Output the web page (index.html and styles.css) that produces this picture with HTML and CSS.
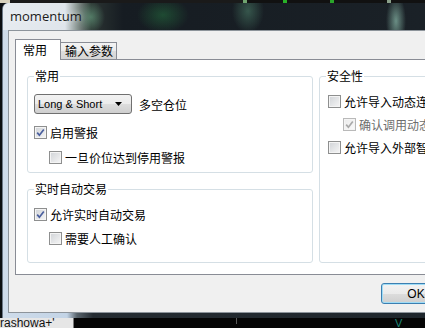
FILE: index.html
```html
<!DOCTYPE html>
<html lang="zh-CN">
<head>
    <meta charset="UTF-8">
    <title>momentum</title>
    <link rel="stylesheet" href="styles.css">
</head>
<body>
<div class="screen">
    <div class="chart-top"></div>

    <div class="window">
        <div class="titlebar"><span class="title">momentum</span></div>

        <div class="client">
            <div class="tabs">
                <div class="tab active">常用</div>
                <div class="tab">输入参数</div>
            </div>

            <div class="panel">
                <div class="col-left">
                    <div class="group g-common">
                        <div class="group-title">常用</div>
                        <div class="combo-row">
                            <div class="combo">
                                <span>Long &amp; Short</span>
                                <svg class="arrow" width="7" height="4" viewBox="0 0 7 4"><polygon points="0,0 7,0 3.5,4" fill="#000"/></svg>
                            </div>
                            <span class="combo-label">多空仓位</span>
                        </div>
                        <div class="check first">
                            <span class="box checked"><svg width="11" height="11" viewBox="0 0 11 11"><path d="M2.2 5.6 L4.4 8.2 L8.8 2.4" fill="none" stroke="#4a5f9e" stroke-width="1.7"/></svg></span>
                            <span>启用警报</span>
                        </div>
                        <div class="check sub">
                            <span class="box"></span>
                            <span>一旦价位达到停用警报</span>
                        </div>
                    </div>

                    <div class="group g-auto">
                        <div class="group-title">实时自动交易</div>
                        <div class="check first">
                            <span class="box checked"><svg width="11" height="11" viewBox="0 0 11 11"><path d="M2.2 5.6 L4.4 8.2 L8.8 2.4" fill="none" stroke="#4a5f9e" stroke-width="1.7"/></svg></span>
                            <span>允许实时自动交易</span>
                        </div>
                        <div class="check sub">
                            <span class="box"></span>
                            <span>需要人工确认</span>
                        </div>
                    </div>
                </div>

                <div class="group g-safe">
                    <div class="group-title">安全性</div>
                    <div class="check first">
                        <span class="box"></span>
                        <span>允许导入动态连</span>
                    </div>
                    <div class="check sub disabled">
                        <span class="box checked"><svg width="11" height="11" viewBox="0 0 11 11"><path d="M2.2 5.6 L4.4 8.2 L8.8 2.4" fill="none" stroke="#a9a9a9" stroke-width="1.7"/></svg></span>
                        <span>确认调用动态</span>
                    </div>
                    <div class="check">
                        <span class="box"></span>
                        <span>允许导入外部智</span>
                    </div>
                </div>
            </div>

            <div class="buttons">
                <button class="btn default">OK</button>
                <button class="btn">取消</button>
            </div>
        </div>
    </div>

    <div class="bottom">
        <div class="task">rashowa+'</div>
        <div class="chart-bottom"><span class="mark">V</span></div>
    </div>
</div>
</body>
</html>
```

FILE: styles.css
```css
* {
    box-sizing: border-box;
}
body {
    margin: 0;
    width: 425px;
    height: 328px;
    overflow: hidden;
    background: #0b0e11;
    font-family: "Noto Sans CJK SC", sans-serif;
    font-size: 12px;
    color: #000;
}
.screen {
    display: flex;
    flex-direction: column;
    width: 425px;
    height: 328px;
    overflow: hidden;
}
.chart-top {
    flex: none;
    height: 3px;
    background: linear-gradient(to right, #d6d0bc 0, #d6d0bc 10px, #1a1a1a 10px, #1a1a1a 243px, #6fa36f 243px, #6fa36f 247px, #111 247px, #111 283px, #28b028 283px, #28b028 287px, #111 287px, #111 330px, #2aa52a 330px, #2aa52a 334px, #111 334px, #111 387px, #8aa08a 387px, #8aa08a 391px, #111 391px);
}

/* window frame */
.window {
    flex: none;
    width: 480px;
    height: 315px;
    margin-left: 2px;
    display: flex;
    flex-direction: column;
    padding-bottom: 5px;
    border-radius: 6px 0 0 0;
    border-left: 1px solid #6b7886;
    background: linear-gradient(to right, #cfdcea 0, #c3d4e6 64px, #58636b 74px, #252c32 90px, #1e252b 100%);
}
.titlebar {
    flex: none;
    height: 27px;
    padding-left: 7px;
    border-radius: 6px 0 0 0;
    background:
        radial-gradient(ellipse 10px 26px at 393px 18px, rgba(160, 215, 195, 0.6), transparent),
        radial-gradient(ellipse 16px 22px at 245px 8px, rgba(110, 190, 150, 0.35), transparent),
        radial-gradient(ellipse 26px 18px at 160px 12px, rgba(40, 130, 70, 0.45), transparent),
        radial-gradient(ellipse 14px 16px at 88px 14px, rgba(120, 190, 150, 0.5), transparent),
        linear-gradient(to right, #e6ebf0 0, #dfe5eb 62px, #8a9692 74px, #2c3533 88px, #161c22 120px, #1b2228 100%);
}
.title {
    font-family: "Open Sans", sans-serif;
    font-size: 13px;
    line-height: 26px;
    color: #1b1b1b;
    text-shadow: 0 0 6px rgba(255, 255, 255, 0.8);
}
.client {
    flex: none;
    height: 283px;
    margin-left: 5px;
    padding: 8px 0 0 6px;
    border: 1px solid #8d949b;
    border-right: none;
    background: #f0f0f0;
}

/* tabs */
.tabs {
    display: flex;
    align-items: flex-end;
    height: 20px;
    position: relative;
    z-index: 1;
}
.tab {
    flex: none;
    width: 56px;
    height: 17px;
    padding-left: 4px;
    line-height: 16px;
    border: 1px solid #898c95;
    border-left: none;
    border-bottom: none;
    background: linear-gradient(#f3f3f3, #ebebeb 50%, #dddddd 50%, #d5d5d5);
}
.tab.active {
    width: 46px;
    height: 21px;
    margin-bottom: -1px;
    padding-left: 7px;
    line-height: 19px;
    border-left: 1px solid #898c95;
    background: #fff;
}
.panel {
    display: flex;
    height: 216px;
    padding: 16px 0 0 11px;
    border: 1px solid #898c95;
    border-right: none;
    background: #fff;
}
.col-left {
    flex: none;
    display: flex;
    flex-direction: column;
    gap: 16px;
    width: 286px;
}

/* group boxes */
.group {
    position: relative;
    border: 1px solid #d5dfe5;
    border-radius: 3px;
}
.group-title {
    position: absolute;
    top: -8px;
    left: 6px;
    padding: 0 1px;
    line-height: 14px;
    background: #fff;
}
.g-common {
    height: 97px;
    padding: 17px 6px 0;
}
.g-auto {
    height: 74px;
    padding: 18px 6px 0;
}
.g-safe {
    flex: none;
    width: 200px;
    height: 187px;
    margin-left: 6px;
    padding: 18px 8px 0;
}
.g-auto .check.first {
    margin-top: 0;
}
.g-auto .check.sub {
    margin-top: 11px;
}
.g-safe .check {
    margin-top: 10px;
}
.g-safe .check.first {
    margin-top: 0;
}

/* combobox */
.combo-row {
    display: flex;
    align-items: center;
}
.combo {
    display: flex;
    align-items: center;
    width: 98px;
    height: 20px;
    padding: 0 9px 0 3px;
    border: 1px solid #707070;
    border-radius: 3px;
    background: linear-gradient(#f2f2f2, #ebebeb 50%, #dddddd 50%, #cfcfcf);
    font-family: "Liberation Sans", sans-serif;
    font-size: 11px;
}
.arrow {
    margin-left: auto;
}
.combo-label {
    margin-left: 7px;
}

/* checkboxes */
.check {
    display: flex;
    align-items: center;
    gap: 3px;
    height: 13px;
    margin-top: 12px;
    line-height: 13px;
    white-space: nowrap;
}
.check.sub {
    margin-left: 15px;
}
.box {
    flex: none;
    width: 13px;
    height: 13px;
    padding: 0;
    border: 1px solid #8e8f8f;
    background: linear-gradient(135deg, #d0d3d7, #f6f6f6);
    box-shadow: inset 0 0 0 1px #f4f4f4;
}
.box svg {
    display: block;
}
.disabled {
    color: #6d6d6d;
}
.disabled .box {
    border-color: #b9b9b9;
    background: linear-gradient(135deg, #ebebeb, #fafafa);
}

/* buttons */
.buttons {
    display: flex;
    gap: 7px;
    margin-top: 8px;
    padding-left: 366px;
}
.btn {
    flex: none;
    width: 70px;
    height: 21px;
    padding: 0;
    border: 1px solid #707070;
    border-radius: 3px;
    background: linear-gradient(#f2f2f2, #ebebeb 50%, #dddddd 50%, #cfcfcf);
    font-family: "Liberation Sans", sans-serif;
    font-size: 12px;
    color: #000;
}
.btn.default {
    border-color: #3c7fb1;
    box-shadow: inset 0 0 0 1px #9fdcf6;
}

/* desktop below */
.bottom {
    display: flex;
    flex: 1;
    overflow: hidden;
}
.task {
    flex: none;
    width: 74px;
    border-right: 1px solid #7a7a7a;
    background: #e6e6e6;
    font-family: "Liberation Sans", sans-serif;
    font-size: 12px;
    line-height: 13px;
    margin-top: -1px;
    color: #111;
    white-space: nowrap;
    overflow: hidden;
}
.chart-bottom {
    flex: 1;
    padding-left: 321px;
    background: #050505 repeating-linear-gradient(to right, transparent 0, transparent 162px, #5a5a5a 162px, #5a5a5a 163px, transparent 163px, transparent 194px);
    background-size: 100% 6px;
    background-repeat: no-repeat;
    font-family: "Liberation Sans", sans-serif;
    font-size: 11px;
    line-height: 10px;
    color: #1f8a78;
}
```
